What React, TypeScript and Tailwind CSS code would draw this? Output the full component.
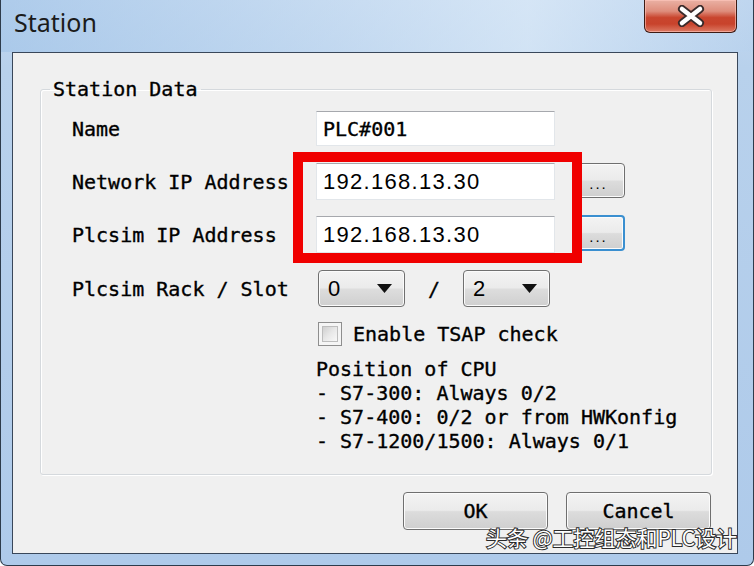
import React from "react";

const lbl =
  "font-['DejaVu_Sans_Mono',monospace] text-[20px] tracking-[0px] text-black leading-none whitespace-pre [-webkit-text-stroke:0.35px_#000]";

function Btn({ children, focused, className }: { children: React.ReactNode; focused?: boolean; className: string }) {
  return (
    <div
      className={
        "flex items-center justify-center rounded-[4px] shadow-[inset_0_0_0_1px_#fbfbfb] bg-[linear-gradient(180deg,#f3f3f3_0%,#ebebeb_48%,#dcdcdc_52%,#cfcfcf_100%)] " +
        (focused ? "border-2 border-[#3a8fd0] " : "border border-[#6f6f6f] ") +
        className
      }
    >
      {children}
    </div>
  );
}

function Combo({ value }: { value: string }) {
  return (
    <div className="w-[87px] h-[37px] flex items-center justify-between pl-[9px] pr-[12px] rounded-[4px] border border-[#707070] shadow-[inset_0_0_0_1px_#fbfbfb] bg-[linear-gradient(180deg,#f3f3f3_0%,#ebebeb_48%,#dddddd_52%,#cfcfcf_100%)]">
      <span className="font-['Liberation_Sans',sans-serif] text-[22px] leading-none text-black">{value}</span>
      <svg width="15" height="9" viewBox="0 0 15 9">
        <path d="M0 0 H15 L7.5 9 Z" fill="#111" />
      </svg>
    </div>
  );
}

function Field({ children, mono }: { children: string; mono?: boolean }) {
  return (
    <div className="w-[239px] h-full bg-white border border-[#e2e6ea] border-t-[#a6a8ad] flex items-center pl-[6px]">
      <span
        className={
          mono
            ? lbl
            : "font-['Liberation_Sans',sans-serif] text-[22px] tracking-[1.3px] leading-none text-black"
        }
      >
        {children}
      </span>
    </div>
  );
}

export default function App() {
  return (
    <div className="relative w-[754px] h-[566px] overflow-hidden flex flex-col rounded-b-[7px] border-x border-b border-[#2d3b4b] bg-[linear-gradient(180deg,#c3d8ef_0%,#b8d1ec_12%,#aecaea_100%)]">
      {/* title bar */}
      <div className="h-[52px] shrink-0 flex items-start justify-between bg-[linear-gradient(90deg,rgba(160,195,232,0.6)_0%,rgba(205,225,245,0.4)_45%,rgba(225,238,250,0.6)_70%,rgba(180,208,238,0.3)_100%)]">
        <div className="pl-[13px] pt-[5px] font-['Noto_Sans',sans-serif] text-[25px] leading-[34px] text-[#1b1b1b]">
          Station
        </div>
        <div className="mr-[16px] w-[93px] h-[33px] rounded-b-[6px] border border-t-0 border-[#3d1b14] shadow-[inset_0_0_0_1px_rgba(255,200,190,0.6)] bg-[linear-gradient(180deg,#eab1a4_0%,#de8d7c_35%,#c9452e_55%,#c8432c_75%,#dc7a64_100%)] flex items-center justify-center">
          <svg width="30" height="22" viewBox="0 0 30 22">
            <path d="M6 4 L24 18 M24 4 L6 18" stroke="#3a2a2a" strokeWidth="8" strokeLinecap="round" />
            <path d="M6 4 L24 18 M24 4 L6 18" stroke="#ffffff" strokeWidth="4.5" strokeLinecap="round" />
          </svg>
        </div>
      </div>

      {/* client area */}
      <div className="relative flex-1 ml-[11px] mr-[15px] mb-[11px] border border-[#39475a] bg-[#f0f0f0] flex flex-col">
        <fieldset className="ml-[27px] mt-[26px] w-[672px] h-[396px] border border-[#d5d9dd] rounded-[3px] shadow-[inset_1px_1px_0_#ffffff,1px_1px_0_#ffffff] pl-[31px] pt-[12px]">
          <legend className={"-ml-[22px] px-[3px] leading-[24px] " + lbl}>Station Data</legend>

          <div className="flex items-center h-[35px]">
            <div className={"w-[244px] " + lbl}>Name</div>
            <Field mono>PLC#001</Field>
          </div>

          <div className="flex items-center h-[37px] mt-[17px]">
            <div className={"w-[244px] " + lbl}>Network IP Address</div>
            <Field>192.168.13.30</Field>
            <Btn className="ml-[17px] w-[53px] h-[35px] -mt-[3px]">
              <span className="font-['Liberation_Sans',sans-serif] text-[15px] leading-none text-black pt-[6px] tracking-[2px]">...</span>
            </Btn>
          </div>

          <div className="flex items-center h-[37px] mt-[16px]">
            <div className={"w-[244px] " + lbl}>Plcsim IP Address</div>
            <Field>192.168.13.30</Field>
            <Btn focused className="ml-[17px] w-[53px] h-[36px] -mt-[3px]">
              <span className="font-['Liberation_Sans',sans-serif] text-[15px] leading-none text-black pt-[6px] tracking-[2px]">...</span>
            </Btn>
          </div>

          <div className="flex items-center h-[37px] mt-[17px]">
            <div className={"w-[246px] " + lbl}>Plcsim Rack / Slot</div>
            <Combo value="0" />
            <span className={"ml-[23px] mr-[23px] " + lbl}>/</span>
            <Combo value="2" />
          </div>

          <div className="flex items-center h-[24px] mt-[15px] ml-[246px]">
            <div className="w-[24px] h-[24px] border border-[#8e8e8e] bg-[#f5f5f5] p-[3px]">
              <div className="w-full h-full border border-[#bdbdbd] bg-[linear-gradient(135deg,#cfcfcf_0%,#e8e8e8_50%,#f8f8f8_100%)]" />
            </div>
            <span className={"ml-[11px] " + lbl}>Enable TSAP check</span>
          </div>

          <div className={"mt-[11px] ml-[244px] flex flex-col " + lbl}>
            <div className="h-[24px] flex items-center">Position of CPU</div>
            <div className="h-[24px] flex items-center">- S7-300: Always 0/2</div>
            <div className="h-[24px] flex items-center">- S7-400: 0/2 or from HWKonfig</div>
            <div className="h-[24px] flex items-center">- S7-1200/1500: Always 0/1</div>
          </div>
        </fieldset>

        <div className="ml-[27px] mt-[17px] w-[671px] flex justify-end gap-[18px]">
          <Btn className="w-[145px] h-[38px]">
            <span className={lbl}>OK</span>
          </Btn>
          <Btn className="w-[145px] h-[38px]">
            <span className={lbl}>Cancel</span>
          </Btn>
        </div>

        {/* red annotation box */}
        <div className="absolute left-[280px] top-[99px] w-[289px] h-[111px] border-[10px] border-[#f00000]" />
      </div>

      {/* watermark */}
      <div className="absolute left-[485px] top-[527px] font-['Noto_Sans_CJK_SC',sans-serif] text-[21px] leading-none text-white [-webkit-text-stroke:2px_#2a2a2a] [paint-order:stroke_fill] whitespace-nowrap">
        头条 @工控组态和PLC设计
      </div>
    </div>
  );
}
